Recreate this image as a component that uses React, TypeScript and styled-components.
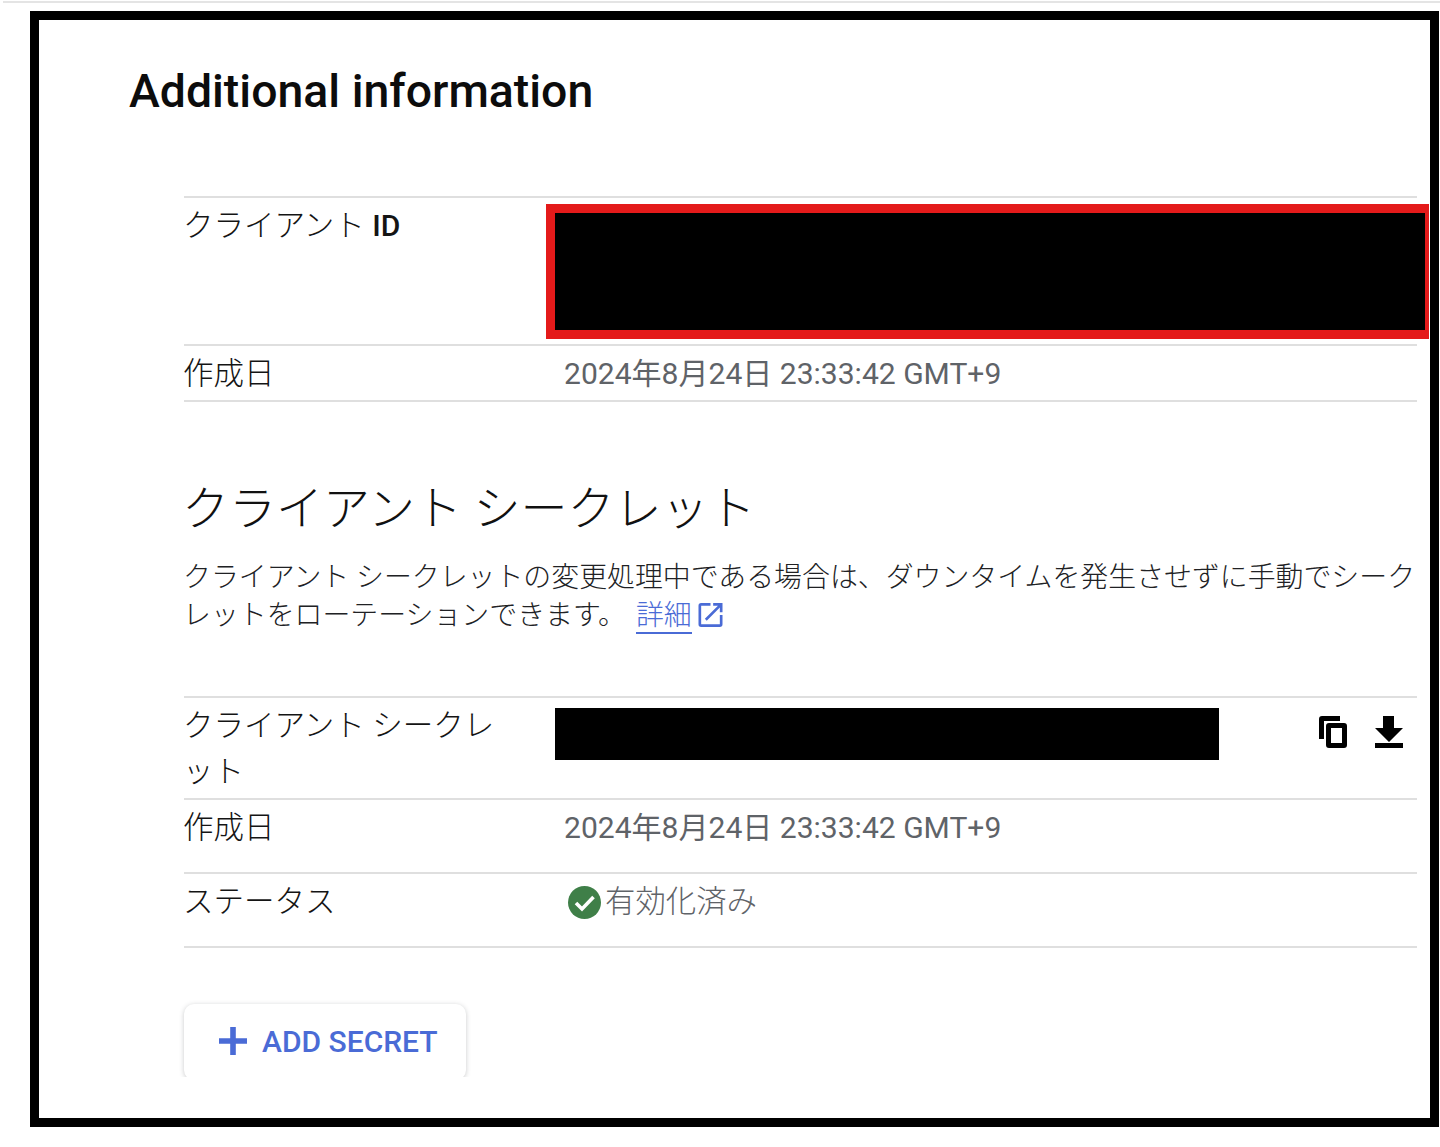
import React from "react";
import styled, { createGlobalStyle } from "styled-components";

const GlobalStyle = createGlobalStyle`
  html, body {
    margin: 0;
    padding: 0;
    background: #fff;
  }
  body {
    font-family: Roboto, "Noto Sans CJK JP", sans-serif;
    color: #202124;
  }
`;

const Page = styled.div`
  width: 1440px;
  height: 1147px;
  overflow: hidden;
  box-sizing: border-box;
  padding: 1px 0 0 30px;
`;

const TopRule = styled.div`
  height: 2px;
  margin: 0 0 8px -27px;
  background: #e4e4e4;
`;

const Frame = styled.div`
  width: 1409px;
  height: 1116px;
  box-sizing: border-box;
  border: 9px solid #000;
  padding: 41px 0 0 90px;
  overflow: hidden;
`;

const Title = styled.h1`
  margin: 0;
  font-size: 46.4px;
  line-height: 60px;
  font-weight: 500;
  color: #0c0c0c;
`;

const Section = styled.div`
  width: 1233px;
  margin-left: 55px;
`;

const FirstTable = styled(Section)`
  margin-top: 75px;
  border-top: 2px solid #dfdfdf;
`;

const Row = styled.div<{ $height: number }>`
  display: grid;
  grid-template-columns: 362px 1fr;
  height: ${(p) => p.$height}px;
  border-bottom: 2px solid #dfdfdf;
  box-sizing: border-box;
`;

const Label = styled.div`
  font-size: 30.5px;
  line-height: 46px;
  font-weight: 300;
  color: #141414;
  padding-top: 5px;
  width: 320px;
  margin-left: -1px;
`;

const LabelStrong = styled.span`
  font-weight: 500;
  font-size: 30px;
`;

const Value = styled.div`
  font-size: 30.05px;
  line-height: 46px;
  font-weight: 400;
  color: #5f6368;
  padding: 5px 0 0 18px;
`;

const RedactedId = styled.div`
  width: 883px;
  height: 135px;
  margin-top: 6px;
  box-sizing: border-box;
  border: 9px solid #e41a1a;
  border-right-width: 4px;
  background: #000;
`;

const Heading = styled.h2`
  margin: 77px 0 0 -2px;
  font-size: 47px;
  line-height: 60px;
  font-weight: 300;
  color: #111;
`;

const Paragraph = styled.p`
  margin: 20px 0 0 -1px;
  font-size: 27.9px;
  line-height: 38px;
  font-weight: 300;
  color: #202124;
`;

const DocLink = styled.a`
  color: #4a6bd6;
  margin-left: 10px;
  border-bottom: 2px solid #4a6bd6;
`;

const LinkIcon = styled.svg`
  width: 25px;
  height: 24px;
  margin-left: 6px;
  vertical-align: -2px;
  fill: #4a6bd6;
`;

const SecretTable = styled(Section)`
  margin-top: 61px;
  border-top: 2px solid #dfdfdf;
`;

const SecretRow = styled.div`
  display: grid;
  grid-template-columns: 371px 664px 1fr;
  height: 102px;
  border-bottom: 2px solid #dfdfdf;
  box-sizing: border-box;
`;

const RedactedSecret = styled.div`
  height: 52px;
  margin-top: 10px;
  background: #000;
`;

const Actions = styled.div`
  display: flex;
  justify-content: flex-end;
  align-items: flex-start;
  gap: 28px;
  padding-top: 18px;
  margin-right: 14px;
`;

const CopyIcon = styled.svg`
  width: 28px;
  height: 32px;
  fill: #000;
`;

const DownloadIcon = styled.svg`
  width: 28px;
  height: 32px;
  fill: #000;
`;

const StatusValue = styled(Value)`
  display: flex;
  align-items: flex-start;
  gap: 4px;
  padding-left: 22px;
  font-size: 30.4px;
  font-weight: 300;
`;

const StatusIcon = styled.svg`
  width: 33px;
  height: 33px;
  margin-top: 7px;
  flex: none;
`;

const ButtonClip = styled.div`
  width: 302px;
  height: 80px;
  margin: 49px 0 0 -10px;
  padding: 7px 10px 0;
  box-sizing: border-box;
  overflow: hidden;
`;

const AddButton = styled.button`
  display: flex;
  align-items: center;
  gap: 15px;
  width: 282px;
  height: 76px;
  padding: 0 0 2px 35px;
  border: none;
  border-radius: 10px;
  background: #fff;
  box-shadow: 0 1px 5px rgba(60, 64, 67, 0.28);
  color: #4a6bd6;
  font-family: Roboto, sans-serif;
  font-size: 30px;
  font-weight: 500;
`;

const PlusIcon = styled.svg`
  width: 28px;
  height: 28px;
  fill: #4a6bd6;
  flex: none;
`;

export default function App() {
  return (
    <Page>
      <GlobalStyle />
      <TopRule />
      <Frame>
        <Title>Additional information</Title>
        <FirstTable>
          <Row $height={148}>
            <Label>
              クライアント <LabelStrong>ID</LabelStrong>
            </Label>
            <div>
              <RedactedId />
            </div>
          </Row>
          <Row $height={56}>
            <Label>作成日</Label>
            <Value>2024年8月24日 23:33:42 GMT+9</Value>
          </Row>
        </FirstTable>
        <Section>
          <Heading>クライアント シークレット</Heading>
          <Paragraph>
            クライアント シークレットの変更処理中である場合は、ダウンタイムを発生させずに手動でシークレットをローテーションできます。
            <DocLink>詳細</DocLink>
            <LinkIcon viewBox="3 3 18 18">
              <path d="M19 19H5V5h7V3H5a2 2 0 0 0-2 2v14a2 2 0 0 0 2 2h14a2 2 0 0 0 2-2v-7h-2v7zM14 3v2h3.59l-9.83 9.83 1.41 1.41L19 6.41V10h2V3h-7z" />
            </LinkIcon>
          </Paragraph>
        </Section>
        <SecretTable>
          <SecretRow>
            <Label>クライアント シークレット</Label>
            <RedactedSecret />
            <Actions>
              <CopyIcon viewBox="0 0 28 32">
                <path d="M3 0h18v5H5v18H0V3a3 3 0 0 1 3-3z" />
                <path fillRule="evenodd" d="M10 7h15a3 3 0 0 1 3 3v19a3 3 0 0 1-3 3H10a3 3 0 0 1-3-3V10a3 3 0 0 1 3-3zm2 5v15h11V12H12z" />
              </CopyIcon>
              <DownloadIcon viewBox="0 0 28 32">
                <path d="M8 0h11v12h9L14 26 0 12h8z" />
                <path d="M0 27h28v5H0z" />
              </DownloadIcon>
            </Actions>
          </SecretRow>
          <Row $height={74}>
            <Label>作成日</Label>
            <Value>2024年8月24日 23:33:42 GMT+9</Value>
          </Row>
          <Row $height={74}>
            <Label>ステータス</Label>
            <StatusValue>
              <StatusIcon viewBox="0 0 33 33">
                <circle cx="16.5" cy="16.5" r="16.5" fill="#3f7f48" />
                <path d="M8 17l6 6L25.5 11" fill="none" stroke="#fff" strokeWidth="3.6" />
              </StatusIcon>
              有効化済み
            </StatusValue>
          </Row>
          <ButtonClip>
            <AddButton>
              <PlusIcon viewBox="0 0 28 28">
                <path d="M11.2 0h5.6v11.2H28v5.6H16.8V28h-5.6V16.8H0v-5.6h11.2z" />
              </PlusIcon>
              ADD SECRET
            </AddButton>
          </ButtonClip>
        </SecretTable>
      </Frame>
    </Page>
  );
}
